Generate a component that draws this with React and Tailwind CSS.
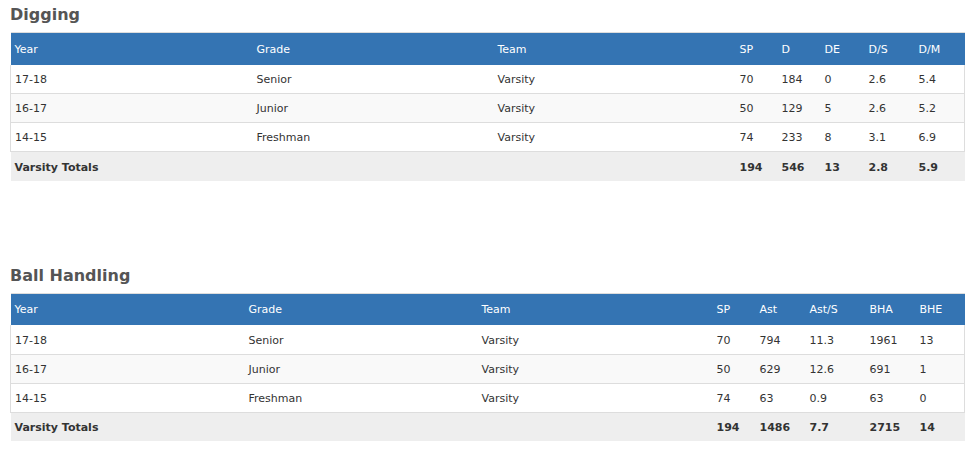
import React from "react";

const digging = {
  title: "Digging",
  cols: [
    ["Year", 242],
    ["Grade", 241],
    ["Team", 242],
    ["SP", 42],
    ["D", 43],
    ["DE", 44],
    ["D/S", 50],
    ["D/M", 50],
  ],
  rows: [
    ["17-18", "Senior", "Varsity", "70", "184", "0", "2.6", "5.4"],
    ["16-17", "Junior", "Varsity", "50", "129", "5", "2.6", "5.2"],
    ["14-15", "Freshman", "Varsity", "74", "233", "8", "3.1", "6.9"],
  ],
  totals: ["Varsity Totals", "", "", "194", "546", "13", "2.8", "5.9"],
};

const ballHandling = {
  title: "Ball Handling",
  cols: [
    ["Year", 234],
    ["Grade", 233],
    ["Team", 235],
    ["SP", 43],
    ["Ast", 50],
    ["Ast/S", 60],
    ["BHA", 50],
    ["BHE", 49],
  ],
  rows: [
    ["17-18", "Senior", "Varsity", "70", "794", "11.3", "1961", "13"],
    ["16-17", "Junior", "Varsity", "50", "629", "12.6", "691", "1"],
    ["14-15", "Freshman", "Varsity", "74", "63", "0.9", "63", "0"],
  ],
  totals: ["Varsity Totals", "", "", "194", "1486", "7.7", "2715", "14"],
};

function StatTable({ data }) {
  return (
    <div>
      <h2 className="h-[32px] pt-[3px] text-[16px] font-bold text-[#555555] leading-[24px]">
        {data.title}
      </h2>
      <table className="table-fixed border-collapse w-[954px] text-[11px] text-[#333333]">
        <colgroup>
          {data.cols.map(([name, w]) => (
            <col key={name} style={{ width: w }} />
          ))}
        </colgroup>
        <thead>
          <tr className="h-[32px] bg-[#3474b3] text-white border-t border-[#dddddd]">
            {data.cols.map(([name]) => (
              <th key={name} className="text-left font-normal pl-[4px] pt-[2px] align-middle">
                {name}
              </th>
            ))}
          </tr>
        </thead>
        <tbody>
          {data.rows.map((r, i) => (
            <tr
              key={i}
              className={
                "h-[29px] border-b border-x border-[#dddddd] " +
                (i % 2 === 1 ? "bg-[#f9f9f9]" : "bg-white")
              }
            >
              {r.map((v, j) => (
                <td key={j} className="pl-[4px] pt-[3px] align-middle">
                  {v}
                </td>
              ))}
            </tr>
          ))}
          <tr className="h-[29px] bg-[#eeeeee] font-bold">
            {data.totals.map((v, j) => (
              <td key={j} className="pl-[4px] pt-[3px] align-middle">
                {v}
              </td>
            ))}
          </tr>
        </tbody>
      </table>
    </div>
  );
}

export default function App() {
  return (
    <div className="bg-white w-[973px] h-[455px] pl-[10px] font-['DejaVu_Sans',Verdana,sans-serif]">
      <StatTable data={digging} />
      <div className="h-[80px]" />
      <StatTable data={ballHandling} />
    </div>
  );
}
